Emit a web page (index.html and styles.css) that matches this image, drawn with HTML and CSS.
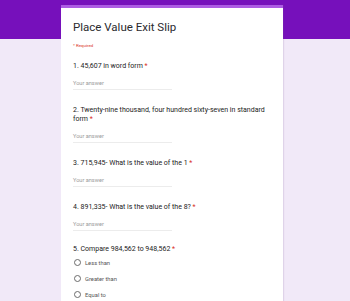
FILE: index.html
```html
<!DOCTYPE html>
<html lang="en">
<head>
<meta charset="utf-8">
<title>Place Value Exit Slip</title>
<link rel="stylesheet" href="styles.css">
</head>
<body>
<main class="form">
  <section class="card">
    <h1 class="title">Place Value Exit Slip</h1>
    <p class="required">* Required</p>

    <div class="question">
      <div class="q-title">1. 45,607 in word form <span class="star">*</span></div>
      <div class="answer">Your answer</div>
    </div>

    <div class="question">
      <div class="q-title">2. Twenty-nine thousand, four hundred sixty-seven in standard form <span class="star">*</span></div>
      <div class="answer">Your answer</div>
    </div>

    <div class="question">
      <div class="q-title">3. 715,945- What is the value of the 1 <span class="star">*</span></div>
      <div class="answer">Your answer</div>
    </div>

    <div class="question">
      <div class="q-title">4. 891,335- What is the value of the 8? <span class="star">*</span></div>
      <div class="answer">Your answer</div>
    </div>

    <div class="question question-choice">
      <div class="q-title">5. Compare 984,562 to 948,562 <span class="star">*</span></div>
      <ul class="options">
        <li class="option"><span class="radio"></span>Less than</li>
        <li class="option"><span class="radio"></span>Greater than</li>
        <li class="option"><span class="radio"></span>Equal to</li>
      </ul>
    </div>
  </section>
</main>
</body>
</html>
```

FILE: styles.css
```css
html, body {
  margin: 0;
  padding: 0;
}

body {
  width: 350px;
  height: 301px;
  overflow: hidden;
  font-family: Roboto, "Liberation Sans", sans-serif;
  background: linear-gradient(#7610bb 0, #7610bb 39px, #f1e9f8 39px);
}

.form {
  padding-top: 5px;
  padding-left: 61px;
}

.card {
  width: 222px;
  box-sizing: border-box;
  background: #ffffff;
  border-top: 3px solid #ad5ce3;
  padding: 11px 12px 0;
  height: 296px;
  box-shadow: 1px 0 1px rgba(120, 90, 150, 0.15);
}

.title {
  margin: 0;
  font-size: 11.5px;
  line-height: 16px;
  font-weight: 400;
  color: #2a2a2e;
}

.required {
  margin: 8px 0 0;
  font-size: 4.4px;
  line-height: 6px;
  color: #d93025;
}

.question {
  margin-top: 12.5px;
}

.question + .question {
  margin-top: 16px;
}

.question + .question-choice {
  margin-top: 14px;
}

.q-title {
  font-size: 7px;
  line-height: 9px;
  color: #222;
}

.star {
  color: #d93025;
}

.answer {
  margin-top: 9px;
  width: 99px;
  font-size: 5.6px;
  line-height: 6px;
  color: #9a9a9a;
  padding-bottom: 3px;
  border-bottom: 1px solid #ececec;
}

.options {
  list-style: none;
  margin: 5.5px 0 0;
  padding: 0;
  display: flex;
  flex-direction: column;
  gap: 9px;
}

.option {
  display: flex;
  align-items: center;
  gap: 4px;
  height: 7px;
  font-size: 5.8px;
  color: #555;
  padding-left: 1px;
}

.radio {
  width: 7px;
  height: 7px;
  box-sizing: border-box;
  border: 1px solid #6b6b6b;
  border-radius: 50%;
}
```
